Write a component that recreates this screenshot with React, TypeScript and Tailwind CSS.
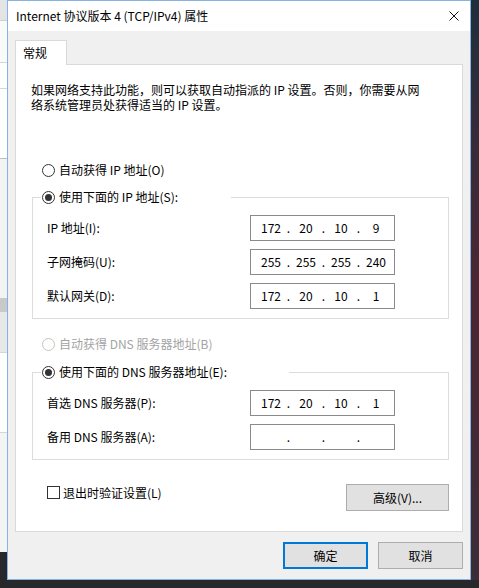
import type { ReactNode } from "react"

const font = "font-['Segoe_UI','Noto_Sans_CJK_SC',sans-serif]"

function Radio({ checked, disabled }: { checked?: boolean; disabled?: boolean }) {
  return (
    <span
      className={`flex h-[13px] w-[13px] shrink-0 items-center justify-center rounded-full border bg-white ${
        disabled ? "border-[#c4c4c4]" : "border-[#333333]"
      }`}
    >
      {checked && <span className="h-[7px] w-[7px] rounded-full bg-[#333333]" />}
    </span>
  )
}

function IpBox({ parts }: { parts: string[] }) {
  return (
    <div className="flex h-[26px] w-[145px] items-center border border-[#8a8a8a] bg-white px-[5px] text-[12px] text-black">
      {parts.map((p, i) => (
        <div key={i} className="flex items-center">
          {i > 0 && <span className="w-[5px] text-center">.</span>}
          <span className="w-[30px] text-center">{p}</span>
        </div>
      ))}
    </div>
  )
}

function Row({ label, parts }: { label: string; parts: string[] }) {
  return (
    <div className="flex h-[26px] items-center">
      <span className="w-[217px] pl-[14px] text-[12px]">{label}</span>
      <IpBox parts={parts} />
    </div>
  )
}

function GroupBox({ header, headerWidth, children }: { header: ReactNode; headerWidth: string; children: ReactNode }) {
  return (
    <div className="ml-[16px] mr-[13px] border border-[#dcdcdc] pb-[9px]">
      <div className={`-mt-[9px] ml-[8px] flex h-[16px] items-center gap-[4px] bg-white pl-[1px] ${headerWidth}`}>
        {header}
      </div>
      <div className="mt-[10px] flex flex-col gap-[8px]">{children}</div>
    </div>
  )
}

export default function App() {
  return (
    <div className={`flex h-[588px] w-[479px] flex-col overflow-hidden bg-[#24262b] ${font} text-[12px] leading-[14px] text-black`}>
      <div className="flex h-[580px]">
        {/* window behind, peeking on the left */}
        <div className="flex w-[7px] flex-col">
          <div className="h-[20px] bg-[#e4e4e4]" />
          <div className="h-[42px] border-t border-[#cfcfcf] bg-[#fafafa]" />
          <div className="h-[26px] border-t border-[#d6d6d6] bg-white" />
          <div className="h-[70px] border-t border-[#d6d6d6] bg-white" />
          <div className="h-[140px] border-t border-[#bdbdbd] bg-[#f3f3f3]" />
          <div className="h-[14px] bg-[#c9c9c9]" />
          <div className="h-[40px] bg-[#e8e8e8]" />
          <div className="h-[80px] border-t border-[#d6d6d6] bg-white" />
          <div className="h-[120px] border-t border-[#d6d6d6] bg-[#f4f4f4]" />
          <div className="flex-1 bg-[#26282c]" />
        </div>

        {/* dialog */}
        <div className="flex h-[580px] w-[464px] flex-col border border-[#86b2e4] bg-[#f0f0f0]">
          <div className="flex h-[30px] items-center justify-between bg-white pl-[8px] pr-[11px]">
            <span className="text-[12px]">Internet 协议版本 4 (TCP/IPv4) 属性</span>
            <svg width="10" height="10" viewBox="0 0 10 10">
              <path d="M0.5 0.5 L9.5 9.5 M9.5 0.5 L0.5 9.5" stroke="#111" strokeWidth="1" fill="none" />
            </svg>
          </div>

          <div className="flex flex-1 flex-col px-[7px] pt-[9px]">
            <div className="relative z-10 -mb-px flex h-[25px] w-[52px] items-center border border-b-0 border-[#d9d9d9] bg-white pl-[7px]">
              常规
            </div>
            <div className="flex h-[468px] flex-col border border-[#d9d9d9] bg-white">
              <p className="pl-[15px] pt-[17px] leading-[15px]">
                如果网络支持此功能，则可以获取自动指派的 IP 设置。否则，你需要从网
                <br />
                络系统管理员处获得适当的 IP 设置。
              </p>

              <div className="ml-[26px] mt-[50px] flex h-[16px] items-center gap-[4px]">
                <Radio />
                <span>自动获得 IP 地址(O)</span>
              </div>

              <div className="mt-[19px]">
                <GroupBox
                  headerWidth="w-[190px]"
                  header={
                    <>
                      <Radio checked />
                      <span>使用下面的 IP 地址(S):</span>
                    </>
                  }
                >
                  <Row label="IP 地址(I):" parts={["172", "20", "10", "9"]} />
                  <Row label="子网掩码(U):" parts={["255", "255", "255", "240"]} />
                  <Row label="默认网关(D):" parts={["172", "20", "10", "1"]} />
                </GroupBox>
              </div>

              <div className="ml-[26px] mt-[17px] flex h-[16px] items-center gap-[4px] text-[#a3a3a3]">
                <Radio disabled />
                <span>自动获得 DNS 服务器地址(B)</span>
              </div>

              <div className="mt-[20px]">
                <GroupBox
                  headerWidth="w-[248px]"
                  header={
                    <>
                      <Radio checked />
                      <span>使用下面的 DNS 服务器地址(E):</span>
                    </>
                  }
                >
                  <Row label="首选 DNS 服务器(P):" parts={["172", "20", "10", "1"]} />
                  <Row label="备用 DNS 服务器(A):" parts={["", "", "", ""]} />
                </GroupBox>
              </div>

              <div className="ml-[31px] mr-[13px] mt-[24px] flex items-start justify-between">
                <div className="flex h-[17px] items-center gap-[3px]">
                  <span className="h-[13px] w-[13px] border border-[#333333] bg-white" />
                  <span>退出时验证设置(L)</span>
                </div>
                <button className="flex h-[27px] w-[103px] items-center justify-center border border-[#adadad] bg-[#e1e1e1] text-[12px]">
                  高级(V)...
                </button>
              </div>
            </div>

            <div className="mt-[10px] flex justify-end gap-[10px]">
              <button className="flex h-[27px] w-[85px] items-center justify-center border-2 border-[#0078d7] bg-[#e1e1e1] text-[12px]">
                确定
              </button>
              <button className="flex h-[27px] w-[85px] items-center justify-center border border-[#adadad] bg-[#e1e1e1] text-[12px]">
                取消
              </button>
            </div>
          </div>
        </div>

        {/* desktop wallpaper on the right */}
        <div className="flex-1 bg-linear-to-b from-[#1e2f3c] via-[#4a2632] to-[#3a2d36]" />
      </div>
      <div className="h-[8px] bg-[#26282c]" />
    </div>
  )
}
